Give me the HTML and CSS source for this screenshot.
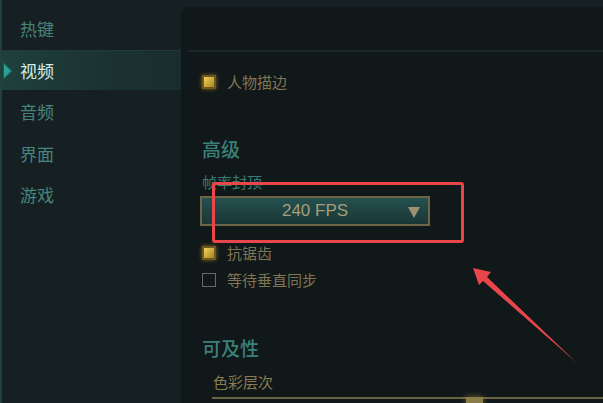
FILE: index.html
```html
<!DOCTYPE html>
<html lang="zh-CN">
<head>
  <meta charset="UTF-8" />
  <title>设置 - 视频</title>
  <link rel="stylesheet" href="styles.css">
</head>
<body>
  <div class="settings">
    <nav class="sidebar">
      <a class="nav-item">热键</a>
      <a class="nav-item active">视频</a>
      <a class="nav-item">音频</a>
      <a class="nav-item">界面</a>
      <a class="nav-item">游戏</a>
    </nav>

    <main class="panel">
      <div class="panel-top"></div>

      <label class="check-row first">
        <span class="box checked"></span>
        <span class="check-label">人物描边</span>
      </label>

      <h2 class="section-title">高级</h2>
      <p class="field-label">帧率封顶</p>
      <div class="select">
        <span class="select-value">240 FPS</span>
        <span class="select-caret"></span>
      </div>

      <label class="check-row">
        <span class="box checked"></span>
        <span class="check-label">抗锯齿</span>
      </label>
      <label class="check-row">
        <span class="box"></span>
        <span class="check-label">等待垂直同步</span>
      </label>

      <h2 class="section-title access">可及性</h2>
      <p class="field-label gold">色彩层次</p>
      <div class="slider">
        <span class="slider-thumb"></span>
      </div>
    </main>
  </div>

  <!-- annotation drawn over the screenshot -->
  <div class="mark-box"></div>
  <svg class="mark-arrow" width="603" height="403" viewBox="0 0 603 403">
    <polygon points="473,268 491,272 487,277 577,363 483,281 479,285" fill="#e8464a" />
  </svg>
</body>
</html>
```

FILE: styles.css
```css
* {
  margin: 0;
  padding: 0;
  box-sizing: border-box;
}

html, body {
  width: 603px;
  height: 403px;
  overflow: hidden;
}

body {
  font-family: "Noto Sans CJK SC", "Noto Sans", sans-serif;
  background: #162023;
  position: relative;
}

.settings {
  display: flex;
  height: 403px;
}

.sidebar {
  width: 181px;
  flex-shrink: 0;
  padding-top: 8px;
  border-left: 2px solid #24403c;
  display: flex;
  flex-direction: column;
}

.nav-item {
  display: flex;
  align-items: center;
  height: 41.5px;
  padding-left: 18px;
  font-size: 17px;
  color: #46857c;
  position: relative;
}

.nav-item.active {
  color: #d6ebe4;
  background: linear-gradient(90deg, #1f403d, #1b3231 60%, #1a2d2e);
  border-top: 1px solid #1f3a38;
  border-bottom: 1px solid #12201f;
}

.nav-item.active::before {
  content: "";
  position: absolute;
  left: 1px;
  top: 11px;
  border-left: 10px solid #1d5a55;
  border-top: 9px solid transparent;
  border-bottom: 9px solid transparent;
}

.nav-item.active::after {
  content: "";
  position: absolute;
  left: 2px;
  top: 13px;
  border-left: 7px solid #2aa197;
  border-top: 7px solid transparent;
  border-bottom: 7px solid transparent;
}

.panel {
  flex: 1;
  margin-top: 7px;
  background: #111819;
  border-top-left-radius: 7px;
  padding-left: 21px;
}

.panel-top {
  height: 45px;
  border-bottom: 2px solid #1b2728;
  margin-left: -14px;
}

.check-row {
  display: flex;
  align-items: center;
  gap: 11px;
  height: 27px;
}

.check-row.first {
  margin-top: 16px;
}

.box {
  flex-shrink: 0;
  width: 14px;
  height: 14px;
  border: 1px solid #6a6a60;
}

.box.checked {
  border: 2px solid #6e5820;
  background: linear-gradient(135deg, #f2d35a, #a9851f);
  box-shadow: 0 0 4px rgba(214, 170, 50, 0.55);
}

.check-label {
  font-size: 15px;
  color: #7f7454;
}

.section-title {
  font-size: 19px;
  font-weight: 500;
  color: #3a8079;
  margin-top: 40px;
  line-height: 28px;
}

.section-title.access {
  margin-top: 41px;
}

.field-label {
  font-size: 15px;
  color: #3a7a72;
  line-height: 20px;
  margin-top: 9px;
}

.field-label.gold {
  color: #8a7d4f;
  padding-left: 11px;
  margin-top: 10px;
}

.select {
  width: 230px;
  height: 30px;
  margin-left: -2px;
  margin-top: 4px;
  margin-bottom: 13px;
  border: 2px solid #6d6446;
  background: linear-gradient(180deg, #24514e, #1a3636);
  display: flex;
  align-items: center;
  justify-content: center;
  position: relative;
}

.select-value {
  font-family: "Liberation Sans", Arial, sans-serif;
  font-size: 17px;
  color: #a69d7b;
}

.select-caret {
  position: absolute;
  right: 8px;
  top: 9px;
  border-top: 11px solid #9e9070;
  border-left: 6px solid transparent;
  border-right: 6px solid transparent;
}

.slider {
  margin-left: 10px;
  margin-top: 5px;
  height: 2px;
  background: #6b6244;
  position: relative;
}

.slider-thumb {
  position: absolute;
  left: 254px;
  top: 0;
  width: 17px;
  height: 8px;
  background: #8a7c48;
  box-shadow: 0 0 6px rgba(214, 180, 90, 0.5);
}

.mark-box {
  position: absolute;
  left: 212px;
  top: 182px;
  width: 252px;
  height: 61px;
  border: 3.5px solid #e8464a;
  border-radius: 3px;
}

.mark-arrow {
  position: absolute;
  left: 0;
  top: 0;
  pointer-events: none;
}
```
